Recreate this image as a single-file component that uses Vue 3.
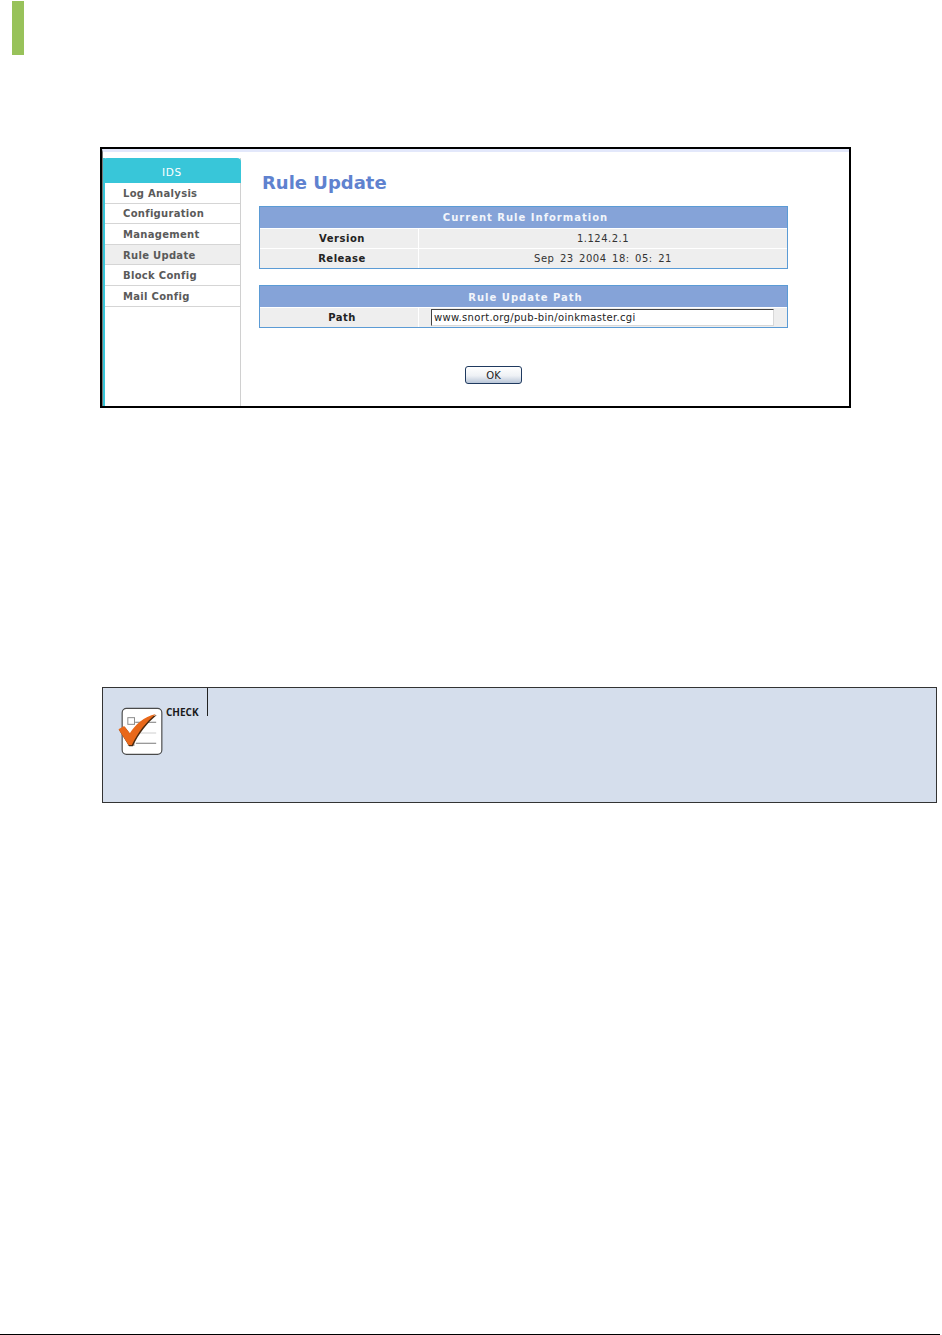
<template>
  <div class="page">
    <div class="marker"></div>

    <section class="shot">
      <div class="shot-inner">
        <aside class="side">
          <div class="side-head">IDS</div>
          <div
            v-for="item in menu"
            :key="item"
            class="side-item"
            :class="{ active: item === 'Rule Update' }"
          >{{ item }}</div>
        </aside>

        <main class="main">
          <h1 class="title">Rule Update</h1>

          <div class="panel first">
            <div class="panel-head">Current Rule Information</div>
            <div class="row">
              <div class="label">Version</div>
              <div class="value">1.124.2.1</div>
            </div>
            <div class="row">
              <div class="label">Release</div>
              <div class="value stamp">Sep 23 2004 18: 05: 21</div>
            </div>
          </div>

          <div class="panel second">
            <div class="panel-head">Rule Update Path</div>
            <div class="row">
              <div class="label">Path</div>
              <div class="value path-cell">
                <input class="path" type="text" value="www.snort.org/pub-bin/oinkmaster.cgi" />
              </div>
            </div>
          </div>

          <div class="actions">
            <button class="ok" type="button">OK</button>
          </div>
        </main>
      </div>
    </section>

    <section class="check">
      <svg class="check-icon" viewBox="66 78 140 150" width="47" height="50">
        <rect x="81" y="85" width="119" height="138" rx="13" fill="#fff" stroke="#4a4a4a" stroke-width="3.5" />
        <rect x="98" y="113" width="20" height="20" fill="#fff" stroke="#8c8c8c" stroke-width="3" />
        <rect x="98" y="180" width="20" height="18" fill="#a8a8a8" />
        <path d="M120 127H183" stroke="#9a9a9a" stroke-width="4" />
        <path d="M122 159H183" stroke="#b5b5b5" stroke-width="2" />
        <path d="M122 190H183" stroke="#9a9a9a" stroke-width="4" />
        <path d="M71 149L88 139L105 161C122 134 146 112 184 103C154 128 130 158 112 197L101 197Z" fill="#4a2a10" transform="translate(1 2)" />
        <path d="M70 148L87 138L104 160C121 133 145 111 182 102C152 127 128 157 110 195L100 195Z" fill="#e8681a" />
      </svg>
      <span class="check-label">CHECK</span>
      <span class="check-rule"></span>
    </section>

    <div class="foot-rule"></div>
  </div>
</template>

<script setup>
const menu = [
  'Log Analysis',
  'Configuration',
  'Management',
  'Rule Update',
  'Block Config',
  'Mail Config',
]
</script>

<style>
html,
body {
  margin: 0;
  background: #fff;
}
</style>

<style scoped>
.page {
  width: 942px;
  height: 1335px;
  display: flex;
  flex-direction: column;
  font-family: "DejaVu Sans", Verdana, sans-serif;
  overflow: hidden;
}

.marker {
  width: 12px;
  height: 54px;
  margin: 1px 0 0 12px;
  background: #98c25a;
}

.shot {
  box-sizing: border-box;
  width: 751px;
  height: 261px;
  margin: 92px 0 0 100px;
  border: 2px solid #000;
  background: #fff;
}

.shot-inner {
  height: 100%;
  display: flex;
  border-left: 1px solid #777;
  border-top: 3px solid #e3e8fb;
  box-sizing: border-box;
}

.side {
  box-sizing: border-box;
  width: 138px;
  margin-top: 6px;
  border-left: 2px solid #38c6d9;
  border-right: 1px solid #d0d0d0;
  flex: none;
}

.side-head {
  height: 25px;
  margin-left: -2px;
  margin-right: -1px;
  background: #38c6d9;
  border-radius: 4px 4px 0 0;
  color: #fff;
  font-size: 10.5px;
  line-height: 28px;
  text-align: center;
  letter-spacing: 0.7px;
}

.side-item {
  box-sizing: border-box;
  height: 20.6px;
  padding-left: 18px;
  border-bottom: 1px solid #d5d5d5;
  font-size: 10px;
  font-weight: 700;
  line-height: 21px;
  color: #5a5a5a;
  letter-spacing: 0.3px;
}

.side-item:nth-child(3) {
  line-height: 19px;
}

.side-item.active {
  background: #eee;
}

.main {
  flex: 1;
  padding-left: 18px;
  min-width: 0;
}

.title {
  margin: 20px 0 0 3px;
  font-size: 18px;
  line-height: 22px;
  font-weight: 700;
  color: #5f82cf;
}

.panel {
  box-sizing: border-box;
  width: 529px;
  border: 1px solid #5b9bd5;
  background: #fff;
}

.panel.first {
  margin-top: 12px;
}

.panel.second {
  margin-top: 16px;
}

.panel-head {
  height: 21px;
  padding-left: 4px;
  background: #85a3d8;
  color: #f2f5fb;
  font-size: 10px;
  font-weight: 700;
  line-height: 21px;
  text-align: center;
  letter-spacing: 1px;
}

.second .panel-head {
  line-height: 23px;
}

.row {
  display: grid;
  grid-template-columns: 158px 1fr;
  gap: 1px;
  height: 20px;
  background: #fff;
}

.label,
.value {
  background: #eee;
  height: 19px;
  margin-top: 1px;
  font-size: 10px;
  line-height: 19px;
  text-align: center;
  color: #222;
  letter-spacing: 0.5px;
}

.label {
  font-weight: 700;
  padding-left: 6px;
}

.value {
  color: #333;
}

.stamp {
  word-spacing: 1.8px;
}

.path-cell {
  display: flex;
  align-items: center;
  padding-left: 12px;
}

.path {
  box-sizing: border-box;
  width: 343px;
  height: 17px;
  padding: 0 2px;
  border: 1px solid;
  border-color: #444 #d8d8d8 #d8d8d8 #444;
  background: #fff;
  font: 10px "DejaVu Sans", Verdana, sans-serif;
  letter-spacing: 0.32px;
  color: #222;
  outline: none;
}

.actions {
  margin-top: 38px;
  padding-left: 206px;
}

.ok {
  box-sizing: border-box;
  display: block;
  width: 57px;
  height: 18px;
  padding: 0;
  border: 1px solid #1f3a5f;
  border-radius: 3px;
  background: linear-gradient(#fff 0%, #eef1f5 55%, #b9c6d8 100%);
  font: 10px "DejaVu Sans", Verdana, sans-serif;
  color: #222;
}

.check {
  box-sizing: border-box;
  position: relative;
  width: 835px;
  height: 116px;
  margin: 279px 0 0 102px;
  border: 1px solid #333;
  background: #d5deec;
}

.check-icon {
  position: absolute;
  left: 14px;
  top: 18px;
}

.check-label {
  position: absolute;
  left: 63px;
  top: 17px;
  font-family: "Open Sans", sans-serif;
  font-size: 10px;
  font-weight: 700;
  line-height: 14px;
  color: #1a1a1a;
}

.check-rule {
  position: absolute;
  left: 104px;
  top: 0;
  width: 1px;
  height: 28px;
  background: #222;
}

.foot-rule {
  width: 940px;
  height: 1px;
  margin-top: auto;
  background: #000;
}
</style>
